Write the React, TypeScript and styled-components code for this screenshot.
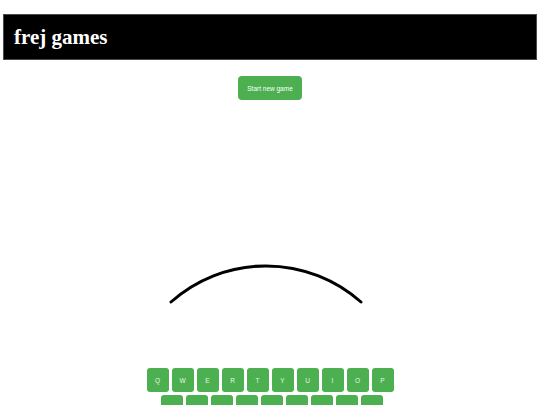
import styled, { createGlobalStyle } from 'styled-components';

const GlobalStyle = createGlobalStyle`
  html, body {
    margin: 0;
    padding: 0;
    background: #ffffff;
    font-family: 'Liberation Sans', Arial, sans-serif;
  }
`;

const Page = styled.div`
  width: 540px;
  display: flex;
  flex-direction: column;
`;

const Header = styled.header`
  margin: 14px 3px 0;
  height: 46px;
  box-sizing: border-box;
  background: #000000;
  border: 1px solid #4a4a4a;
  display: flex;
  align-items: center;
  padding-left: 10px;
`;

const Title = styled.h1`
  margin: 0;
  color: #ffffff;
  font-family: 'Liberation Serif', 'Times New Roman', serif;
  font-size: 21px;
  font-weight: bold;
`;

const Controls = styled.div`
  display: flex;
  justify-content: center;
  padding-top: 16px;
`;

const StartButton = styled.button`
  width: 64px;
  height: 24px;
  border: none;
  border-radius: 4px;
  background: #4caf50;
  color: #ffffff;
  font-family: 'Liberation Sans', Arial, sans-serif;
  font-size: 6.5px;
  padding: 0;
  cursor: pointer;
`;

const Stage = styled.div`
  height: 268px;
  display: flex;
  justify-content: center;
`;

const Keyboard = styled.div`
  display: flex;
  flex-direction: column;
  align-items: center;
  gap: 3px;
`;

const KeyRow = styled.div<{ $shift?: number }>`
  display: flex;
  gap: 3px;
  margin-left: ${(p) => p.$shift || 0}px;
`;

const Key = styled.button`
  width: 22px;
  height: 24px;
  border: none;
  border-radius: 3px;
  background: #4caf50;
  color: #e8f5e9;
  font-family: 'Liberation Sans', Arial, sans-serif;
  font-size: 6.5px;
  padding: 0;
`;

const rows = ['QWERTYUIOP', 'ASDFGHJKL', 'ZXCVBNM'];

export default function App() {
  return (
    <Page>
      <GlobalStyle />
      <Header>
        <Title>frej games</Title>
      </Header>
      <Controls>
        <StartButton>Start new game</StartButton>
      </Controls>
      <Stage>
        <svg width="300" height="268" viewBox="0 0 300 268">
          <path
            d="M51 202 A143 143 0 0 1 241 202"
            fill="none"
            stroke="#000"
            strokeWidth="3"
            strokeLinecap="round"
          />
        </svg>
      </Stage>
      <Keyboard>
        {rows.map((row, i) => (
          <KeyRow key={row} $shift={i === 1 ? 4 : 0}>
            {row.split('').map((letter) => (
              <Key key={letter}>{letter}</Key>
            ))}
          </KeyRow>
        ))}
      </Keyboard>
    </Page>
  );
}
